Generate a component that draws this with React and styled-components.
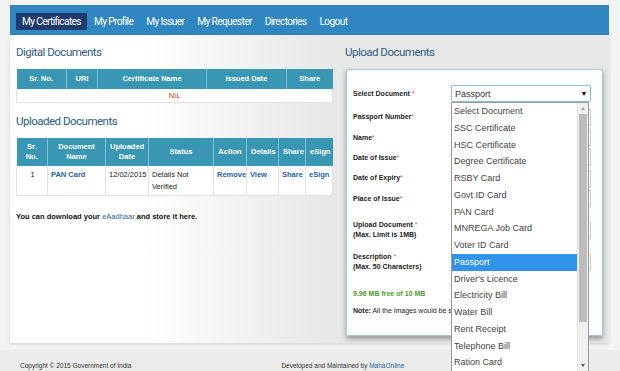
import React from 'react';
import styled, { createGlobalStyle } from 'styled-components';

const GlobalStyle = createGlobalStyle`
  html, body {
    margin: 0;
    padding: 0;
    background: #f3f3f3;
    font-family: "Liberation Sans", Arial, sans-serif;
  }
`;

const Page = styled.div`
  width: 620px;
  height: 371px;
  overflow: hidden;
  padding-top: 5px;
  box-sizing: border-box;
`;

const Nav = styled.ul`
  list-style: none;
  margin: 0 11px 0 10px;
  padding: 0 6px;
  height: 30px;
  background: #2f86c0;
  display: flex;
  align-items: center;
  gap: 1px;
`;

const NavItem = styled.li`
  height: 17px;
  padding: 0 6px;
  display: flex;
  align-items: center;
  margin-top: 2px;
  font-family: "Roboto", sans-serif;
  font-size: 10.2px;
  letter-spacing: -0.65px;
  color: #fff;
  background: ${(p) => (p.active ? '#1e3b6f' : 'transparent')};
`;

const Card = styled.div`
  margin: 0 11px 0 10px;
  height: 308px;
  display: grid;
  grid-template-columns: 323px 1fr;
  background: linear-gradient(to right, #ffffff 0%, #ffffff 22%, #e8e8e8 52%, #e8e8e8 100%);
  box-shadow: 0 1px 3px rgba(0, 0, 0, 0.15);
`;

const LeftCol = styled.div`
  padding: 9px 0 0 6px;
`;

const RightCol = styled.div`
  padding: 9px 0 0 12px;
`;

const Heading = styled.h3`
  margin: ${(p) => p.top || 0}px 0 9px 0;
  font-family: "Roboto", sans-serif;
  font-weight: normal;
  font-size: 11.5px;
  letter-spacing: -0.5px;
  line-height: 16px;
  color: #2c5d8a;
`;

const Table = styled.table`
  width: 316px;
  border-collapse: collapse;
  table-layout: fixed;
  font-size: 7.5px;
`;

const Th = styled.th`
  box-sizing: border-box;
  background: #3a97b4;
  color: #fff;
  font-weight: bold;
  height: ${(p) => p.h || 20}px;
  border-left: 1px solid #7fc0d4;
  padding: 0 4px;
  line-height: 10px;
  width: ${(p) => p.w}px;
  &:first-child {
    border-left: none;
  }
`;

const Td = styled.td`
  background: #fff;
  border: 1px solid #e2e2e2;
  border-top: none;
  vertical-align: top;
  padding: 3px 2px 2px 3px;
  line-height: 12px;
  color: #222;
  text-align: ${(p) => p.align || 'left'};
  height: ${(p) => p.h || 18}px;
  box-sizing: border-box;
  white-space: ${(p) => (p.wrap ? 'normal' : 'nowrap')};
`;

const NilCell = styled.td`
  background: #fff;
  border: 1px solid #e2e2e2;
  border-top: none;
  text-align: center;
  color: #c0392b;
  height: 13px;
  padding: 0;
  font-size: 7.5px;
`;

const Link = styled.a`
  color: #1f5fa0;
  font-weight: ${(p) => (p.bold ? 'bold' : 'normal')};
  text-decoration: none;
`;

const Note = styled.p`
  margin: 16px 0 0;
  font-size: 7.5px;
  font-weight: bold;
  color: #111;
`;

const FormBox = styled.div`
  margin-left: 1px;
  width: 257px;
  height: 267px;
  box-sizing: border-box;
  background: #fff;
  border: 1px solid #a8c8dc;
  box-shadow: 0 3px 5px rgba(0, 0, 0, 0.35);
  padding: 15px 0 0 6px;
`;

const Row = styled.div`
  display: grid;
  grid-template-columns: 98px 140px;
  align-items: center;
  height: ${(p) => p.h}px;
  margin-top: ${(p) => p.mt || 0}px;
`;

const Label = styled.div`
  font-size: 7px;
  font-weight: bold;
  color: #222;
  line-height: 10px;
`;

const Sub = styled.div`
  font-size: 7px;
  font-weight: bold;
  color: #222;
`;

const Star = styled.span`
  color: #d9534f;
  font-weight: normal;
`;

const Green = styled.div`
  margin-top: 13px;
  font-size: 7px;
  font-weight: bold;
  color: #4a9a2a;
  height: 16px;
  line-height: 16px;
`;

const NoteLine = styled.div`
  margin-top: 4px;
  font-size: 7px;
  line-height: 10px;
  color: #222;
  white-space: nowrap;
`;

const SelectWrap = styled.div`
  position: relative;
  width: 140px;
`;

const SelectBox = styled.div`
  height: 17px;
  box-sizing: border-box;
  border: 1px solid #8fbce0;
  border-radius: 2px;
  background: #fff;
  font-size: 9px;
  color: #333;
  display: flex;
  align-items: center;
  justify-content: space-between;
  padding: 0 4px 0 3px;
`;

const Caret = styled.span`
  width: 0;
  height: 0;
  border-left: 2.5px solid transparent;
  border-right: 2.5px solid transparent;
  border-top: 4px solid #111;
`;

const Input = styled.div`
  height: 15px;
  border: 1px solid #ccc;
  background: #fff;
`;

const Dropdown = styled.div`
  position: absolute;
  top: 17px;
  left: 0;
  width: 138px;
  height: 270px;
  box-sizing: border-box;
  border: 1px solid #9a9a9a;
  background: #fff;
  display: flex;
  z-index: 5;
`;

const Options = styled.ul`
  list-style: none;
  margin: 0;
  padding: 0;
  flex: 1;
`;

const Option = styled.li`
  height: 16.75px;
  line-height: 16.75px;
  padding-left: 2px;
  font-size: 9px;
  color: ${(p) => (p.selected ? '#fff' : '#444')};
  background: ${(p) => (p.selected ? '#3194ea' : 'transparent')};
  white-space: nowrap;
`;

const Scrollbar = styled.div`
  width: 10px;
  background: #f0f0f0;
  border-left: 1px solid #e4e4e4;
  display: flex;
  flex-direction: column;
  align-items: center;
`;

const Arrow = styled.span`
  width: 0;
  height: 0;
  margin: 4px 0;
  border-left: 2.5px solid transparent;
  border-right: 2.5px solid transparent;
  ${(p) => (p.up ? 'border-bottom: 3px solid #a0a0a0;' : 'border-top: 3px solid #555;')}
`;

const Thumb = styled.div`
  width: 8px;
  height: 208px;
  background: #bdbdbd;
`;

const Track = styled.div`
  flex: 1;
`;

const Footer = styled.div`
  margin-top: 7px;
  height: 30px;
  background: #ececec;
  display: flex;
  font-size: 6.5px;
  color: #333;
  padding: 12px 0 0 20px;
  box-sizing: border-box;
`;

const FooterRight = styled.div`
  margin-left: 150px;
`;

const options = [
  'Select Document',
  'SSC Certificate',
  'HSC Certificate',
  'Degree Certificate',
  'RSBY Card',
  'Govt ID Card',
  'PAN Card',
  'MNREGA Job Card',
  'Voter ID Card',
  'Passport',
  "Driver's Licence",
  'Electricity Bill',
  'Water Bill',
  'Rent Receipt',
  'Telephone Bill',
  'Ration Card',
];

const navItems = ['My Certificates', 'My Profile', 'My Issuer', 'My Requester', 'Directories', 'Logout'];

const formRows = [
  { label: 'Passport Number', h: 22, mt: 4 },
  { label: 'Name', h: 19 },
  { label: 'Date of Issue', h: 21 },
  { label: 'Date of Expiry', h: 20 },
  { label: 'Place of Issue', h: 21 },
];

export default function App() {
  return (
    <Page>
      <GlobalStyle />
      <Nav>
        {navItems.map((n, i) => (
          <NavItem key={n} active={i === 0}>
            {n}
          </NavItem>
        ))}
      </Nav>
      <Card>
        <LeftCol>
          <Heading>Digital Documents</Heading>
          <Table>
            <thead>
              <tr>
                <Th w={50}>Sr. No.</Th>
                <Th w={31}>URI</Th>
                <Th w={109}>Certificate Name</Th>
                <Th w={80}>Issued Date</Th>
                <Th w={46}>Share</Th>
              </tr>
            </thead>
            <tbody>
              <tr>
                <NilCell colSpan={5}>NIL</NilCell>
              </tr>
            </tbody>
          </Table>
          <Heading top={10}>Uploaded Documents</Heading>
          <Table>
            <thead>
              <tr>
                <Th w={31} h={28}>Sr. No.</Th>
                <Th w={58} h={28}>Document Name</Th>
                <Th w={43} h={28}>Uploaded Date</Th>
                <Th w={65} h={28}>Status</Th>
                <Th w={33} h={28}>Action</Th>
                <Th w={32} h={28}>Details</Th>
                <Th w={27} h={28}>Share</Th>
                <Th w={27} h={28}>eSign</Th>
              </tr>
            </thead>
            <tbody>
              <tr>
                <Td align="center" h={25}>1</Td>
                <Td><Link bold>PAN Card</Link></Td>
                <Td>12/02/2015</Td>
                <Td wrap>Details Not Verified</Td>
                <Td><Link bold>Remove</Link></Td>
                <Td><Link bold>View</Link></Td>
                <Td><Link bold>Share</Link></Td>
                <Td><Link bold>eSign</Link></Td>
              </tr>
            </tbody>
          </Table>
          <Note>
            You can download your <Link>eAadhaar</Link> and store it here.
          </Note>
        </LeftCol>
        <RightCol>
          <Heading>Upload Documents</Heading>
          <FormBox>
            <Row h={17}>
              <Label>
                Select Document <Star>*</Star>
              </Label>
              <SelectWrap>
                <SelectBox>
                  Passport
                  <Caret />
                </SelectBox>
                <Dropdown>
                  <Options>
                    {options.map((o) => (
                      <Option key={o} selected={o === 'Passport'}>
                        {o}
                      </Option>
                    ))}
                  </Options>
                  <Scrollbar>
                    <Arrow up />
                    <Thumb />
                    <Track />
                    <Arrow />
                  </Scrollbar>
                </Dropdown>
              </SelectWrap>
            </Row>
            {formRows.map((r) => (
              <Row key={r.label} h={r.h} mt={r.mt}>
                <Label>
                  {r.label}
                  <Star>*</Star>
                </Label>
                <Input />
              </Row>
            ))}
            <Row h={42}>
              <Label>
                Upload Document <Star>*</Star>
                <Sub>(Max. Limit is 1MB)</Sub>
              </Label>
              <Input />
            </Row>
            <Row h={22}>
              <Label>
                Description <Star>*</Star>
                <Sub>(Max. 50 Characters)</Sub>
              </Label>
              <Input />
            </Row>
            <Green>9.96 MB free of 10 MB</Green>
            <NoteLine>
              <b>Note:</b> All the images would be saved in your account.
            </NoteLine>
          </FormBox>
        </RightCol>
      </Card>
      <Footer>
        <div>Copyright © 2015 Government of India</div>
        <FooterRight>
          Developed and Maintained by <Link>MahaOnline</Link>
        </FooterRight>
      </Footer>
    </Page>
  );
}
